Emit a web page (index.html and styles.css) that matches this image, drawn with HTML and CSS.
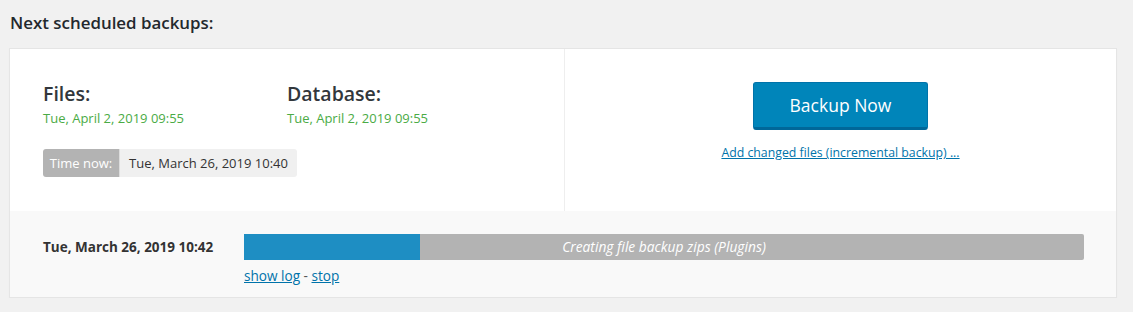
FILE: index.html
```html
<!DOCTYPE html>
<html>
<head>
<meta charset="utf-8">
<link rel="stylesheet" href="styles.css">
</head>
<body>
<h2 class="title">Next scheduled backups:</h2>
<div class="card">
  <div class="top">
    <div class="left">
      <div class="sched">
        <div class="sched-item">
          <h3>Files:</h3>
          <div class="date">Tue, April 2, 2019 09:55</div>
        </div>
        <div class="sched-item">
          <h3>Database:</h3>
          <div class="date">Tue, April 2, 2019 09:55</div>
        </div>
      </div>
      <div class="now"><span class="now-label">Time now:</span><span class="now-value">Tue, March 26, 2019 10:40</span></div>
    </div>
    <div class="right">
      <button class="btn">Backup Now</button>
      <a class="inc" href="#">Add changed files (incremental backup) ...</a>
    </div>
  </div>
  <div class="bottom">
    <div class="run-date">Tue, March 26, 2019 10:42</div>
    <div class="run">
      <div class="bar">
        <div class="fill" style="width:21%"></div>
        <div class="bar-text">Creating file backup zips (Plugins)</div>
      </div>
      <div class="links"><a href="#">show log</a> - <a href="#">stop</a></div>
    </div>
  </div>
</div>
</body>
</html>
```

FILE: styles.css
```css
* { box-sizing: border-box; }
body {
  margin: 0;
  padding: 0 16px 0 9px;
  background: #f1f1f1;
  font-family: "Open Sans", "Noto Sans", sans-serif;
  font-size: 13px;
  color: #444;
}
.title {
  margin: 0;
  padding: 11px 0 0 1px;
  height: 48px;
  font-size: 16.9px;
  font-weight: 600;
  color: #23282d;
}
.card {
  border: 1px solid #e5e5e5;
  box-shadow: 0 1px 1px rgba(0,0,0,0.04);
  background: #fff;
}
.top {
  display: flex;
  height: 162px;
}
.left {
  width: 555px;
  border-right: 1px solid #eee;
  padding: 32px 0 0 33px;
}
.sched { display: flex; }
.sched-item { width: 244px; }
.sched-item h3 {
  margin: 0;
  font-size: 19.5px;
  font-weight: 600;
  color: #32373c;
  line-height: 26px;
}
.date {
  color: #4aab45;
  font-size: 13px;
  margin-top: 2px;
  line-height: 18px;
}
.now {
  display: inline-flex;
  margin-top: 22px;
  height: 28px;
  border-radius: 3px;
  overflow: hidden;
  font-size: 13px;
  line-height: 28px;
}
.now-label {
  background: #b3b3b3;
  color: #fff;
  width: 77px;
  text-align: center;
  border-right: 1px solid #ddd;
}
.now-value {
  background: #f0f0f0;
  color: #333;
  width: 177px;
  text-align: center;
}
.right {
  flex: 1;
  display: flex;
  flex-direction: column;
  align-items: center;
  padding-top: 33px;
}
.btn {
  width: 175px;
  height: 48px;
  background: #0085ba;
  border: 1px solid #0073aa;
  border-bottom: 3px solid #006799;
  border-radius: 3px;
  color: #fff;
  font-family: inherit;
  font-size: 17.5px;
  padding: 0 0 1px;
}
.inc {
  margin-top: 14px;
  color: #0073aa;
  font-size: 12.3px;
}
.bottom {
  background: #f9f9f9;
  height: 86px;
  display: flex;
  padding: 23px 0 0 33px;
}
.run-date {
  width: 201px;
  font-weight: 700;
  color: #333;
  font-size: 13.5px;
  line-height: 26px;
}
.run { width: 840px; }
.bar {
  position: relative;
  height: 26px;
  background: #b3b3b3;
  border-radius: 0 2px 2px 0;
}
.fill {
  height: 100%;
  background: #1e8ec3;
}
.bar-text {
  position: absolute;
  inset: 0;
  text-align: center;
  line-height: 26px;
  color: #fff;
  font-style: italic;
  font-size: 13.8px;
}
.links {
  margin-top: 6px;
  font-size: 13.6px;
  color: #555;
}
.links a { color: #0073aa; }
```
